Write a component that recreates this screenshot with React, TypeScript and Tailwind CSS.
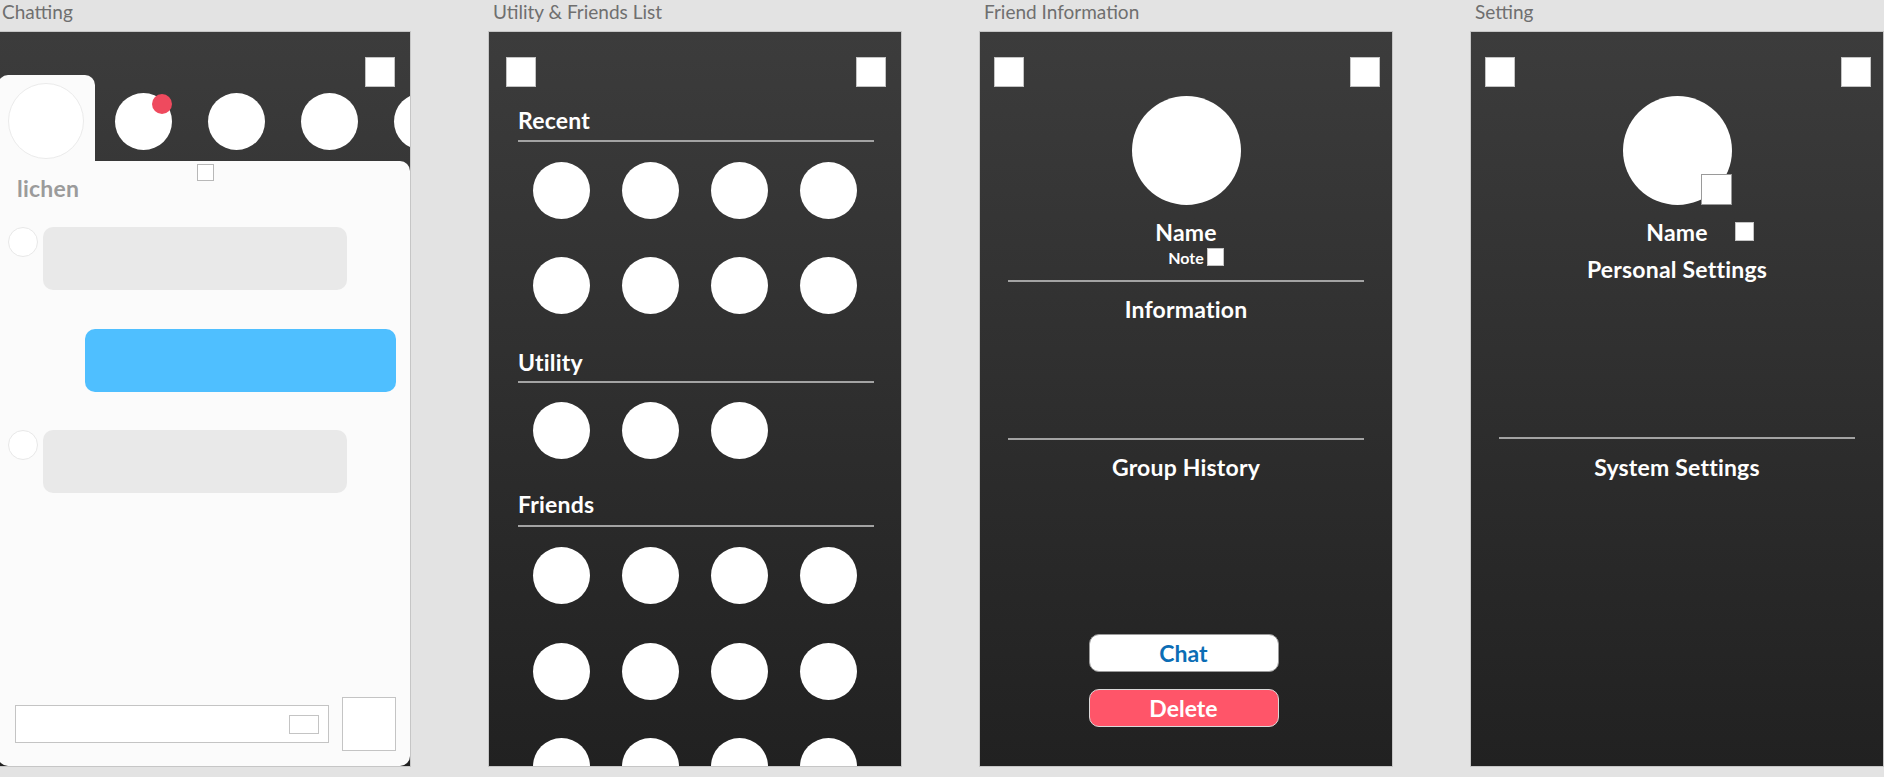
import React from "react";

function Sq({ className = "" }: { className?: string }) {
  return <div className={"w-[30px] h-[30px] bg-white border border-[#c4c4c4] shrink-0 " + className} />;
}

function Dot() {
  return <div className="w-[57px] h-[57px] rounded-full bg-white shrink-0" />;
}

function Column({ title, children }: { title: string; children: React.ReactNode }) {
  return (
    <div className="flex flex-col w-[414px] shrink-0">
      <div className="h-[31px] pl-[5px] text-[19px] leading-[23px] text-[#6f6f6f] whitespace-nowrap">{title}</div>
      <div className="h-[736px] border border-[#c6c6c6] bg-linear-to-b from-[#3c3c3c] to-[#212121] overflow-hidden flex flex-col">
        {children}
      </div>
    </div>
  );
}

function Rule() {
  return <div className="h-[2px] w-[356px] bg-[#a3a3a3]" />;
}

function Heading({ children }: { children: React.ReactNode }) {
  return (
    <div className="text-[23px] leading-[24px] tracking-[0.2px] font-bold text-white whitespace-nowrap">{children}</div>
  );
}

function DotRow({ n, className = "" }: { n: number; className?: string }) {
  return (
    <div className={"flex gap-[32px] pl-[15px] " + className}>
      {Array.from({ length: n }).map((_, i) => (
        <Dot key={i} />
      ))}
    </div>
  );
}

function Chatting() {
  return (
    <Column title="Chatting">
      <div className="flex justify-end pt-[25px] pr-[15px]">
        <Sq />
      </div>
      <div className="flex items-start mt-[-12px] h-[86px] shrink-0">
        <div className="w-[97px] h-[86px] bg-[#fbfbfb] rounded-t-[10px] pl-[10px] pt-[8px] shrink-0">
          <div className="w-[76px] h-[76px] rounded-full bg-white border border-[#ebebeb]" />
        </div>
        <div className="flex gap-[36px] pl-[20px] pt-[18px] shrink-0">
          <div className="relative w-[57px] h-[57px] rounded-full bg-white shrink-0">
            <span className="absolute left-[37px] top-[1px] w-[20px] h-[20px] rounded-full bg-[#ef4a5e]" />
          </div>
          <Dot />
          <Dot />
          <Dot />
        </div>
      </div>
      <div className="relative flex-1 bg-[#fbfbfb] rounded-tr-[10px] rounded-b-[10px] flex flex-col">
        <div className="absolute left-[199px] top-[3px] w-[17px] h-[17px] bg-white border border-[#b8b8b8]" />
        <div className="pt-[15px] pl-[19px] text-[23px] leading-[24px] tracking-[0.2px] font-bold text-[#9b9b9b]">
          lichen
        </div>
        <div className="mt-[27px] flex items-start gap-[5px] pl-[10px]">
          <div className="w-[30px] h-[30px] rounded-full bg-white border border-[#e8e8e8] shrink-0" />
          <div className="w-[304px] h-[63px] bg-[#e9e9e9] rounded-[10px]" />
        </div>
        <div className="mt-[39px] self-end mr-[14px] w-[311px] h-[63px] bg-[#4fbfff] rounded-[10px]" />
        <div className="mt-[38px] flex items-start gap-[5px] pl-[10px]">
          <div className="w-[30px] h-[30px] rounded-full bg-white border border-[#e8e8e8] shrink-0" />
          <div className="w-[304px] h-[63px] bg-[#e9e9e9] rounded-[10px]" />
        </div>
        <div className="mt-auto flex items-center pl-[17px] pr-[14px] pb-[15px] gap-[13px]">
          <div className="w-[314px] h-[38px] border border-[#c4c4c4] bg-white flex items-center justify-end pr-[9px]">
            <div className="w-[30px] h-[19px] border border-[#c4c4c4]" />
          </div>
          <div className="w-[54px] h-[54px] border border-[#c4c4c4] bg-white" />
        </div>
      </div>
    </Column>
  );
}

function FriendsList() {
  return (
    <Column title="Utility & Friends List">
      <div className="flex justify-between pt-[25px] pl-[17px] pr-[15px]">
        <Sq />
        <Sq />
      </div>
      <div className="mx-[29px] flex flex-col">
        <div className="mt-[21px]">
          <Heading>Recent</Heading>
        </div>
        <div className="mt-[8px]">
          <Rule />
        </div>
        <DotRow n={4} className="mt-[20px]" />
        <DotRow n={4} className="mt-[38px]" />
        <div className="mt-[36px]">
          <Heading>Utility</Heading>
        </div>
        <div className="mt-[7px]">
          <Rule />
        </div>
        <DotRow n={3} className="mt-[19px]" />
        <div className="mt-[33px]">
          <Heading>Friends</Heading>
        </div>
        <div className="mt-[9px]">
          <Rule />
        </div>
        <DotRow n={4} className="mt-[20px]" />
        <DotRow n={4} className="mt-[39px]" />
        <DotRow n={4} className="mt-[38px]" />
      </div>
    </Column>
  );
}

function FriendInfo() {
  return (
    <Column title="Friend Information">
      <div className="flex justify-between pt-[25px] pl-[14px] pr-[12px]">
        <Sq />
        <Sq />
      </div>
      <div className="flex flex-col items-center flex-1">
        <div className="mt-[9px] w-[109px] h-[109px] rounded-full bg-white" />
        <div className="mt-[15px]">
          <Heading>Name</Heading>
        </div>
        <div className="mt-[5px] relative text-[16px] leading-[18px] font-bold text-white">
          Note
          <span className="absolute left-full ml-[3px] top-[-1px] w-[17px] h-[18px] bg-white border border-[#c4c4c4]" />
        </div>
        <div className="mt-[13px]">
          <Rule />
        </div>
        <div className="mt-[15px]">
          <Heading>Information</Heading>
        </div>
        <div className="mt-[117px]">
          <Rule />
        </div>
        <div className="mt-[15px]">
          <Heading>Group History</Heading>
        </div>
        <div className="mt-auto mb-[39px] flex flex-col items-center gap-[17px] mr-[5px]">
          <div className="w-[190px] h-[38px] rounded-[10px] bg-white border border-[#9a9a9a] flex items-center justify-center text-[23px] font-bold text-[#0b6db5]">
            Chat
          </div>
          <div className="w-[190px] h-[38px] rounded-[10px] bg-[#ff5569] border border-[#d9d9d9] flex items-center justify-center text-[23px] font-bold text-white">
            Delete
          </div>
        </div>
      </div>
    </Column>
  );
}

function Setting() {
  return (
    <Column title="Setting">
      <div className="flex justify-between pt-[25px] pl-[14px] pr-[12px]">
        <Sq />
        <Sq />
      </div>
      <div className="flex flex-col items-center flex-1">
        <div className="mt-[9px] relative w-[109px] h-[109px]">
          <div className="w-[109px] h-[109px] rounded-full bg-white" />
          <div className="absolute right-0 bottom-0 w-[31px] h-[31px] bg-white border border-[#9a9a9a]" />
        </div>
        <div className="mt-[15px] relative">
          <Heading>Name</Heading>
          <span className="absolute left-full ml-[27px] top-[2px] w-[19px] h-[19px] bg-white border border-[#c4c4c4]" />
        </div>
        <div className="mt-[13px]">
          <Heading>Personal Settings</Heading>
        </div>
        <div className="mt-[156px]">
          <Rule />
        </div>
        <div className="mt-[16px]">
          <Heading>System Settings</Heading>
        </div>
      </div>
    </Column>
  );
}

export default function App() {
  return (
    <div className="w-[1884px] h-[777px] overflow-hidden bg-[#e3e3e3] font-[family-name:Lato,sans-serif]">
      <div className="flex gap-[77px] ml-[-3px]">
        <Chatting />
        <FriendsList />
        <FriendInfo />
        <Setting />
      </div>
    </div>
  );
}
